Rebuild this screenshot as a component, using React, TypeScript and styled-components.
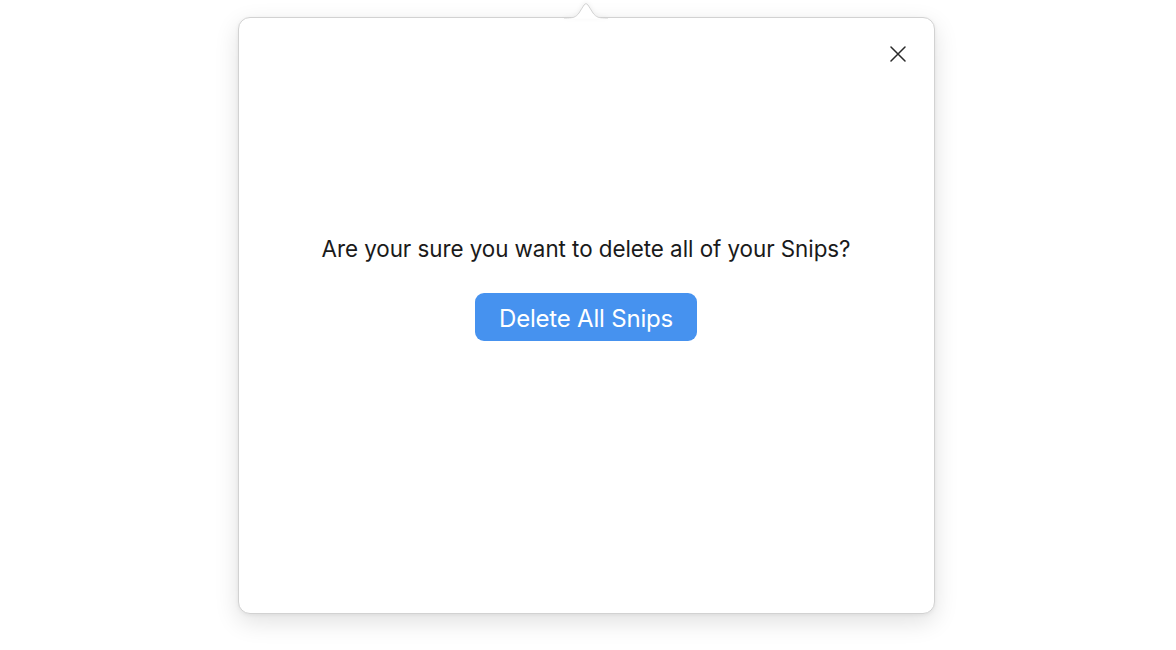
import React from 'react';
import styled, { createGlobalStyle } from 'styled-components';

const Global = createGlobalStyle`
  html, body {
    margin: 0;
    padding: 0;
    background: #ffffff;
    font-family: Inter, "Noto Sans", "Liberation Sans", sans-serif;
  }
`

const Page = styled.div`
  width: 1176px;
  height: 650px;
  display: flex;
  justify-content: center;
  padding-top: 17px;
  box-sizing: border-box;
  overflow: hidden;
`

const Popover = styled.div`
  position: relative;
  width: 697px;
  height: 597px;
  margin-left: -4px;
  box-sizing: border-box;
  background: #fff;
  border: 1px solid #d2d2d2;
  border-radius: 12px;
  box-shadow: 0 8px 24px rgba(0, 0, 0, 0.12), 0 1px 4px rgba(0, 0, 0, 0.06);
  display: flex;
  flex-direction: column;
  align-items: center;
  padding-top: 216px;
`

const Arrow = styled.svg`
  position: absolute;
  top: -17px;
  left: 50%;
  margin-left: -22px;
  width: 44px;
  height: 18px;
  filter: drop-shadow(0 -1px 2px rgba(0, 0, 0, 0.06));
`

const CloseButton = styled.button`
  position: absolute;
  top: 26px;
  right: 26px;
  width: 20px;
  height: 20px;
  padding: 0;
  border: none;
  background: none;
  cursor: pointer;
  display: flex;
  align-items: center;
  justify-content: center;
`

const Question = styled.p`
  margin: 0;
  font-size: 22.4px;
  letter-spacing: -0.05px;
  color: #1a1a1a;
  line-height: 30px;
`

const DeleteButton = styled.button`
  margin-top: 29px;
  width: 222px;
  height: 48px;
  border: none;
  border-radius: 9px;
  background: #4692ef;
  color: #fff;
  font-family: inherit;
  font-size: 24px;
  letter-spacing: -0.2px;
  padding-top: 4px;
  cursor: pointer;
`

export default function App() {
  return (
    <>
      <Global />
      <Page>
        <Popover>
          <Arrow viewBox="0 0 44 18">
            <path d="M0 17.5 C9 17.5 12 16 15 12 L20 4 Q22 1 24 4 L29 12 C32 16 35 17.5 44 17.5" fill="#fff" stroke="#d2d2d2" strokeWidth="1" />
            <rect x="0" y="17.5" width="44" height="1" fill="#fff" />
          </Arrow>
          <CloseButton aria-label="Close">
            <svg width="16" height="16" viewBox="0 0 16 16">
              <path d="M1 1 L15 15 M15 1 L1 15" stroke="#2a2a2a" strokeWidth="1.5" strokeLinecap="round" />
            </svg>
          </CloseButton>
          <Question>Are your sure you want to delete all of your Snips?</Question>
          <DeleteButton>Delete All Snips</DeleteButton>
        </Popover>
      </Page>
    </>
  );
}
